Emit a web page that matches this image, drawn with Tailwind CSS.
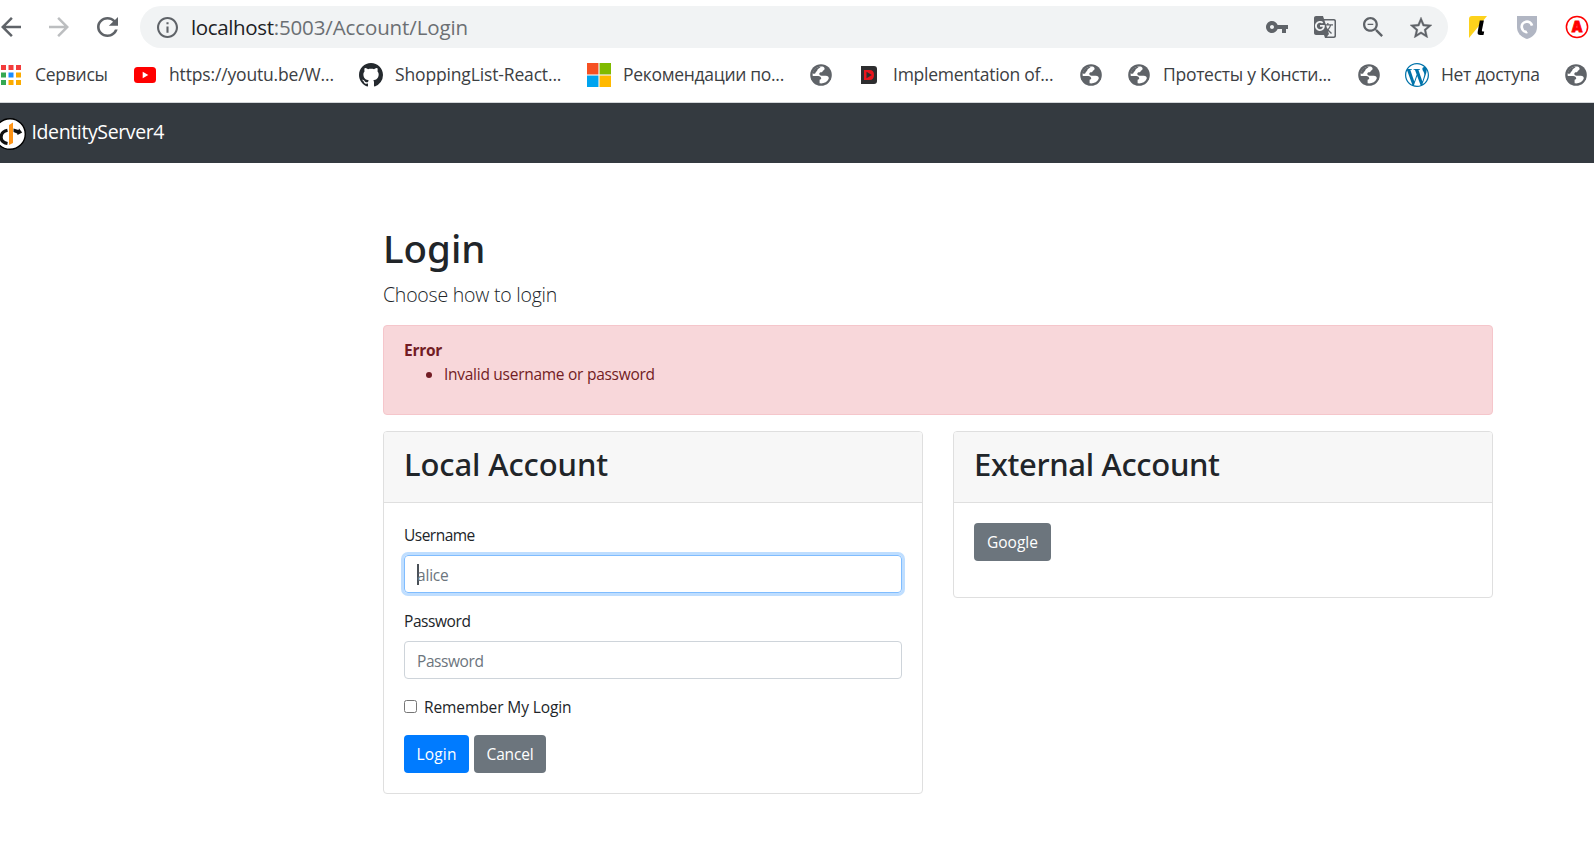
<!DOCTYPE html>
<html lang="ru">
<head>
<meta charset="utf-8">
<title>IdentityServer4</title>
<script src="https://cdn.jsdelivr.net/npm/@tailwindcss/browser@4"></script>
</head>
<body class="w-[1594px] h-[844px] overflow-hidden bg-white font-['Open_Sans','Noto_Sans',sans-serif] text-[15.5px] leading-6 text-[#212529]">

<svg class="hidden">
  <symbol id="globe" viewBox="0 0 22 22">
    <circle cx="11" cy="11" r="10.8" fill="#5f6368"/>
    <path d="M13.300 2.700C8.500 1.900 3.900 4.600 2.700 9.400C2.600 10.600 2.600 11.400 2.800 12H8.200C10 12 11.200 13 11.200 14.600C11.200 15.400 10.600 15.700 9.600 15.700V19.300C13.800 19.900 17.200 17.800 18.700 14.700C19.200 12.600 17.600 11.700 15.800 11.700H11.700C10 11.700 9.300 10.800 9.300 9.800C9.300 8.700 10.200 8.100 11.500 8.200C12.800 8.300 12.500 6.700 13.500 6.300C14.800 5.900 15.200 3.900 13.300 2.700Z" fill="#fff"/>
    <path d="M3.500 6.500C5.500 3.800 8 2.600 10.800 2.700C9.800 4.200 7.500 4.600 7.300 6.300C7.200 7.700 5.700 7.500 5.500 9C5.300 10 3.900 9.800 2.700 9.400Z" fill="#5f6368"/>
  </symbol>
</svg>

<header>
  <!-- Address bar -->
  <div class="flex h-[54px] items-center">
    <svg class="ml-px size-[20px] shrink-0" viewBox="4 4 16 16" fill="#5f6368"><path d="M20 11H7.83l5.59-5.59L12 4l-8 8 8 8 1.41-1.41L7.83 13H20v-2z"/></svg>
    <svg class="ml-[28px] size-[20px] shrink-0" viewBox="4 4 16 16" fill="#bcbec0"><path d="M12 4l-1.41 1.41L16.17 11H4v2h12.17l-5.58 5.59L12 20l8-8z"/></svg>
    <svg class="ml-[28px] h-[20px] w-[21px] shrink-0" viewBox="4 4 16 16" preserveAspectRatio="none" fill="#5f6368"><path d="M17.65 6.35C16.2 4.9 14.21 4 12 4c-4.42 0-7.99 3.58-7.99 8s3.57 8 7.99 8c3.73 0 6.84-2.55 7.73-6h-2.08c-.82 2.33-3.04 4-5.65 4-3.31 0-6-2.69-6-6s2.69-6 6-6c1.66 0 3.14.69 4.22 1.78L13 11h7V4l-2.35 2.35z"/></svg>
    <div class="ml-[22px] flex h-[42px] w-[1308px] shrink-0 items-center rounded-full bg-[#f1f3f4] pl-[17px] pr-[16px]">
      <svg class="size-[21px]" viewBox="2 2 20 20" fill="#5f6368"><path d="M11 7h2v2h-2zm0 4h2v6h-2zm1-9C6.48 2 2 6.48 2 12s4.48 10 10 10 10-4.48 10-10S17.52 2 12 2zm0 18c-4.41 0-8-3.59-8-8s3.59-8 8-8 8 3.59 8 8-3.59 8-8 8z"/></svg>
      <div class="ml-[13px] grow whitespace-nowrap text-[20.5px] leading-[42px] tracking-[-0.12px] text-[#6b6f73]"><span class="tracking-[-0.36px] text-[#202124]">localhost</span>:5003/Account/Login</div>
      <svg class="h-[12px] w-[22px]" viewBox="1 6 22 12" fill="#5f6368"><path d="M12.65 10C11.83 7.67 9.61 6 7 6c-3.31 0-6 2.690-6 6s2.690 6 6 6c2.610 0 4.830-1.670 5.650-4H17v4h4v-4h2v-4H12.650zM7 14c-1.100 0-2-.900-2-2s.900-2 2-2 2 .900 2 2-.900 2-2 2z"/></svg>
      <svg class="ml-[26px] size-[22px]" viewBox="1 1 22 22" fill="#5f6368"><path d="M21 4H11l-1-3H3c-1.100 0-2 .9-2 2v15c0 1.100.9 2 2 2h8l1 3h9c1.100 0 2-.9 2-2V6c0-1.100-.9-2-2-2zM7 16c-2.760 0-5-2.240-5-5s2.240-5 5-5c1.350 0 2.480.5 3.350 1.300L9.030 8.570c-.38-.36-1.040-.78-2.030-.78-1.740 0-3.150 1.440-3.150 3.210S5.260 14.210 7 14.210c2.010 0 2.840-1.440 2.920-2.410H7v-1.710h4.680c.07.31.12.61.12 1.020C11.800 13.970 9.890 16 7 16zm6.170-5.420h3.700c-.43 1.250-1.110 2.430-2.050 3.470-.31-.35-.6-.72-.86-1.100l-.79-2.370zm8.330 9.920c0 .55-.45 1-1 1H14l2-2.500-1.040-3.100 3.100 3.100.92-.92-3.300-3.250.02-.02c1.130-1.250 1.930-2.690 2.400-4.220H20v-1.300h-4.530V8h-1.290v1.290h-1.440L11.460 5.500h9.040c.55 0 1 .45 1 1v14z"/></svg>
      <svg class="ml-[27px] size-[20px]" viewBox="3 3 17.5 17.5" fill="#5f6368"><path d="M15.5 14h-.79l-.28-.27C15.41 12.59 16 11.11 16 9.5 16 5.91 13.09 3 9.5 3S3 5.91 3 9.5 5.91 16 9.5 16c1.61 0 3.09-.59 4.23-1.57l.27.28v.79l5 4.99L20.49 19l-4.99-5zm-6 0C7.01 14 5 11.99 5 9.5S7.01 5 9.5 5 14 7.01 14 9.5 11.99 14 9.5 14zM7 9h5v1H7z"/></svg>
      <svg class="ml-[27px] h-[21px] w-[22px]" viewBox="2 2 20 19" fill="#5f6368"><path d="M22 9.240l-7.190-.62L12 2 9.190 8.630 2 9.240l5.460 4.730L5.820 21 12 17.270 18.180 21l-1.630-7.030L22 9.240zM12 15.400l-3.760 2.270 1-4.280-3.320-2.880 4.380-.38L12 6.100l1.710 4.040 4.380.38-3.320 2.880 1 4.280L12 15.400z" stroke="#5f6368" stroke-width=".3"/></svg>
    </div>
    <svg class="ml-[21px] h-[22px] w-[18px] shrink-0" viewBox="0 0 18 22"><path d="M3 0h15L0 22V3q0-3 3-3z" fill="#fdd21c"/><path d="M10.800 4.500h4.100l-2 9.700q-.2 1.400 1 1.400h1.300l-.7 3.400h-3.300q-3.100 0-2.500-3.300z" fill="#000"/></svg>
    <svg class="ml-[30px] h-[23px] w-[20px] shrink-0" viewBox="0 0 20 23"><path d="M0 0h20v11c0 6-4 10-10 12C4 21 0 17 0 11z" fill="#b1b6c3"/><path d="M10.500 16A5.200 5.200 0 1 1 15 9.600" fill="none" stroke="#fff" stroke-width="2.700"/><path d="M9.500 11.500h3.500v4.500h-3z" fill="#b1b6c3"/></svg>
    <svg class="ml-[28px] size-[24px] shrink-0" viewBox="0 0 24 24"><circle cx="12" cy="12" r="10.6" fill="#fff" stroke="#f00" stroke-width="1.500"/><text x="12" y="17" text-anchor="middle" font-family="Inter" font-size="14" font-weight="900" fill="#f00" stroke="#f00" stroke-width=".8">A</text></svg>
  </div>

  <!-- Bookmarks bar -->
  <div class="flex h-[48px] items-center overflow-hidden whitespace-nowrap pb-[6px] pl-px text-[17.5px] leading-[40px] text-[#3c4043]">
    <div class="flex w-[133px] shrink-0 items-center gap-[14px]">
      <svg class="size-[20px] shrink-0" viewBox="0 0 20 20"><path d="M0 0h5v5H0zM7.500 0h5v5h-5zM15 0h5v5h-5z" fill="#f33c3c"/><path d="M0 7.500h5v5H0zM0 15h5v5H0z" fill="#34a853"/><path d="M7.500 7.500h5v5h-5z" fill="#1a8cff"/><path d="M15 7.500h5v5h-5zM7.500 15h5v5h-5zM15 15h5v5h-5z" fill="#fbab00"/></svg>
      <span class="-mt-[2px] tracking-[-0.26px]">Сервисы</span>
    </div>
    <div class="flex w-[225px] shrink-0 items-center gap-[13px]">
      <svg class="h-[16px] w-[22px] shrink-0" viewBox="0 0 22 16"><rect width="22" height="16" rx="3.500" fill="#f00"/><path d="M8.700 4.700v6.600L14.300 8z" fill="#fff"/></svg>
      <span class="-mt-[2px] tracking-[-0.16px]">https://youtu.be/W...</span>
    </div>
    <div class="flex w-[228px] shrink-0 items-center gap-3">
      <svg class="size-[24px] shrink-0" viewBox="0 0 16 16" fill="#24292e"><path d="M8 0C3.58 0 0 3.58 0 8c0 3.54 2.29 6.53 5.47 7.59.4.07.55-.17.55-.38 0-.19-.01-.82-.01-1.49-2.01.37-2.53-.49-2.69-.94-.09-.23-.48-.94-.82-1.13-.28-.15-.68-.52-.01-.53.63-.01 1.08.58 1.23.82.72 1.21 1.87.87 2.33.66.07-.52.28-.87.51-1.07-1.78-.2-3.64-.89-3.64-3.95 0-.87.31-1.59.82-2.15-.08-.2-.36-1.02.08-2.12 0 0 .67-.21 2.2.82.64-.18 1.32-.27 2-.27.68 0 1.36.09 2 .27 1.53-1.04 2.2-.82 2.2-.82.44 1.1.16 1.92.08 2.12.51.56.82 1.27.82 2.15 0 3.07-1.87 3.75-3.65 3.95.29.25.54.73.54 1.48 0 1.07-.01 1.93-.01 2.2 0 .21.15.46.55.38A8.013 8.013 0 0016 8c0-4.420-3.580-8-8-8z"/></svg>
      <span class="-mt-[2px] tracking-[-0.15px]">ShoppingList-React...</span>
    </div>
    <div class="flex w-[223px] shrink-0 items-center gap-3">
      <svg class="size-[24px] shrink-0" viewBox="0 0 24 24"><path d="M0 0h24v24H0z" fill="#f1f1f1"/><path d="M0 0h11.400v11.400H0z" fill="#f65022"/><path d="M12.600 0H24v11.400H12.600z" fill="#7fba00"/><path d="M0 12.600h11.400V24H0z" fill="#00a4ef"/><path d="M12.600 12.600H24V24H12.600z" fill="#ffb900"/></svg>
      <span class="-mt-[2px] tracking-[-0.3px]">Рекомендации по...</span>
    </div>
    <div class="flex w-[51px] shrink-0"><svg class="size-[22px]"><use href="#globe"/></svg></div>
    <div class="flex w-[219px] shrink-0 items-center gap-4">
      <svg class="h-[18px] w-[16px] shrink-0" viewBox="0 0 16 18"><path d="M0 0h13q3 0 3 3v12q0 3-3 3H0z" fill="#2d2d2f"/><path d="M3 4h5.500q4.500 0 4.500 5t-4.500 5H3z" fill="#e8151d"/><path d="M5.500 5.800v6.400L10.800 9z" fill="#2d2d2f"/></svg>
      <span class="-mt-[2px] tracking-[-0.26px]">Implementation of...</span>
    </div>
    <div class="flex w-[48px] shrink-0"><svg class="size-[22px]"><use href="#globe"/></svg></div>
    <div class="flex w-[230px] shrink-0 items-center gap-[13px]">
      <svg class="size-[22px] shrink-0"><use href="#globe"/></svg>
      <span class="-mt-[2px] tracking-[-0.28px]">Протесты у Консти...</span>
    </div>
    <div class="flex w-[47px] shrink-0"><svg class="size-[22px]"><use href="#globe"/></svg></div>
    <div class="flex w-[160px] shrink-0 items-center gap-3">
      <svg class="size-[24px] shrink-0" viewBox="0 0 24 24" fill="#0073aa"><path d="M21.469 6.825c.84 1.537 1.318 3.300 1.318 5.175 0 3.979-2.156 7.456-5.363 9.325l3.295-9.527c.615-1.540.82-2.771.82-3.864 0-.405-.026-.78-.07-1.110m-7.981.105c.647-.03 1.232-.105 1.232-.105.582-.075.514-.93-.067-.899 0 0-1.755.135-2.880.135-1.064 0-2.850-.15-2.850-.15-.585-.03-.661.855-.075.885 0 0 .54.061 1.125.09l1.680 4.605-2.370 7.080L5.354 6.900c.649-.03 1.234-.1 1.234-.1.585-.075.516-.93-.065-.896 0 0-1.746.138-2.874.138-.2 0-.438-.008-.69-.015C4.911 3.150 8.235 1.215 12 1.215c2.809 0 5.365 1.072 7.286 2.833-.046-.003-.091-.009-.141-.009-1.060 0-1.812.923-1.812 1.914 0 .89.513 1.643 1.060 2.531.411.72.89 1.643.89 2.977 0 .915-.354 1.994-.821 3.479l-1.075 3.585-3.900-11.610.001.014zM12 22.784c-1.059 0-2.081-.153-3.048-.437l3.237-9.406 3.315 9.087c.024.053.05.101.078.149-1.120.393-2.325.609-3.582.609M1.211 12c0-1.564.336-3.050.935-4.390L7.290 21.709C3.694 19.960 1.212 16.271 1.211 12M12 0C5.385 0 0 5.385 0 12s5.385 12 12 12 12-5.385 12-12S18.615 0 12 0"/></svg>
      <span class="-mt-[2px] tracking-[-0.31px]">Нет доступа</span>
    </div>
    <svg class="size-[22px] shrink-0"><use href="#globe"/></svg>
  </div>
</header>

<!-- Site navigation -->
<nav class="flex h-[61px] items-start overflow-hidden border-t border-[#d3d6d9] bg-[#343a40] pt-[15px]">
  <svg class="-ml-[6px] size-[32px] shrink-0" viewBox="0 0 32 32"><circle cx="16" cy="16" r="15.300" fill="#fff" stroke="#000" stroke-width="1.400"/><path d="M13.500 12.300C5.500 14 4.500 24 13.500 25.500" fill="none" stroke="#111" stroke-width="3.200"/><path d="M19.500 10.500l5 1.500.5-1.500 3.200 4-4.700 2.500-.3-1.500-3.700-1.500z" fill="#111"/><path d="M15 7l4-2.500v20.500L15 27z" fill="#ff9416"/></svg>
  <span class="ml-[5.5px] -mt-px text-[19.5px] leading-[30px] tracking-[-0.38px] text-white">IdentityServer4</span>
</nav>

<main class="ml-[383px] mt-[60px] w-[1110px]">
  <h1 class="mb-2 h-12 font-['Noto_Sans'] text-[38.5px] font-medium leading-[51px] tracking-[0px]">Login</h1>
  <p class="mb-4 h-[30px] text-[19.5px] font-light leading-[32px] tracking-[-0.23px]">Choose how to login</p>

  <div class="mb-4 h-[90px] rounded border border-[#f5c6cb] bg-[#f8d7da] px-5 py-3 text-[#721c24]">
    <strong class="block font-bold tracking-[-0.25px]">Error</strong>
    <ul class="list-disc pl-10"><li class="tracking-[-0.27px]">Invalid username or password</li></ul>
  </div>

  <div class="grid grid-cols-2 items-start gap-[30px]">
    <section class="rounded border border-[#dfdfdf]">
      <div class="h-[71px] rounded-t-[3px] border-b border-[#dfdfdf] bg-[#f7f7f7] px-5 pt-3">
        <h2 class="font-['Noto_Sans'] text-[31px] font-medium leading-[41px] tracking-[-0.1px]">Local Account</h2>
      </div>
      <form class="p-5">
        <label class="mb-2 block tracking-[-0.52px]">Username</label>
        <div class="mb-4 flex h-[38px] items-center rounded border border-[#80bdff] px-3 text-[#6c757d] shadow-[0_0_0_3px_#bfdeff]">
          <span class="h-[21px] w-[2px] -mr-[2px] bg-[#495057]"></span><span class="pt-[2px] tracking-[-0.2px]">alice</span>
        </div>
        <label class="mb-2 block tracking-[-0.42px]">Password</label>
        <div class="mb-4 flex h-[38px] items-center rounded border border-[#ced4da] px-3 pt-[2px] tracking-[-0.42px] text-[#6c757d]">Password</div>
        <label class="mb-4 flex h-6 items-center gap-[7px]">
          <span class="-mt-px size-[13px] rounded-[2.5px] border border-[#767676] bg-white"></span>
          <span class="tracking-[-0.1px]">Remember My Login</span>
        </label>
        <div class="flex gap-[5px]">
          <button type="button" class="h-[38px] w-[65px] rounded bg-[#007bff] tracking-[0.2px] text-white">Login</button>
          <button type="button" class="h-[38px] w-[72px] rounded bg-[#6c757d] tracking-[-0.17px] text-white">Cancel</button>
        </div>
      </form>
    </section>
    <section class="rounded border border-[#dfdfdf]">
      <div class="h-[71px] rounded-t-[3px] border-b border-[#dfdfdf] bg-[#f7f7f7] px-5 pt-3">
        <h2 class="font-['Noto_Sans'] text-[31px] font-medium leading-[41px] tracking-[-0.33px]">External Account</h2>
      </div>
      <div class="p-5 pb-9">
        <button type="button" class="block h-[38px] w-[77px] rounded bg-[#6c757d] text-white">Google</button>
      </div>
    </section>
  </div>
</main>
</body>
</html>
